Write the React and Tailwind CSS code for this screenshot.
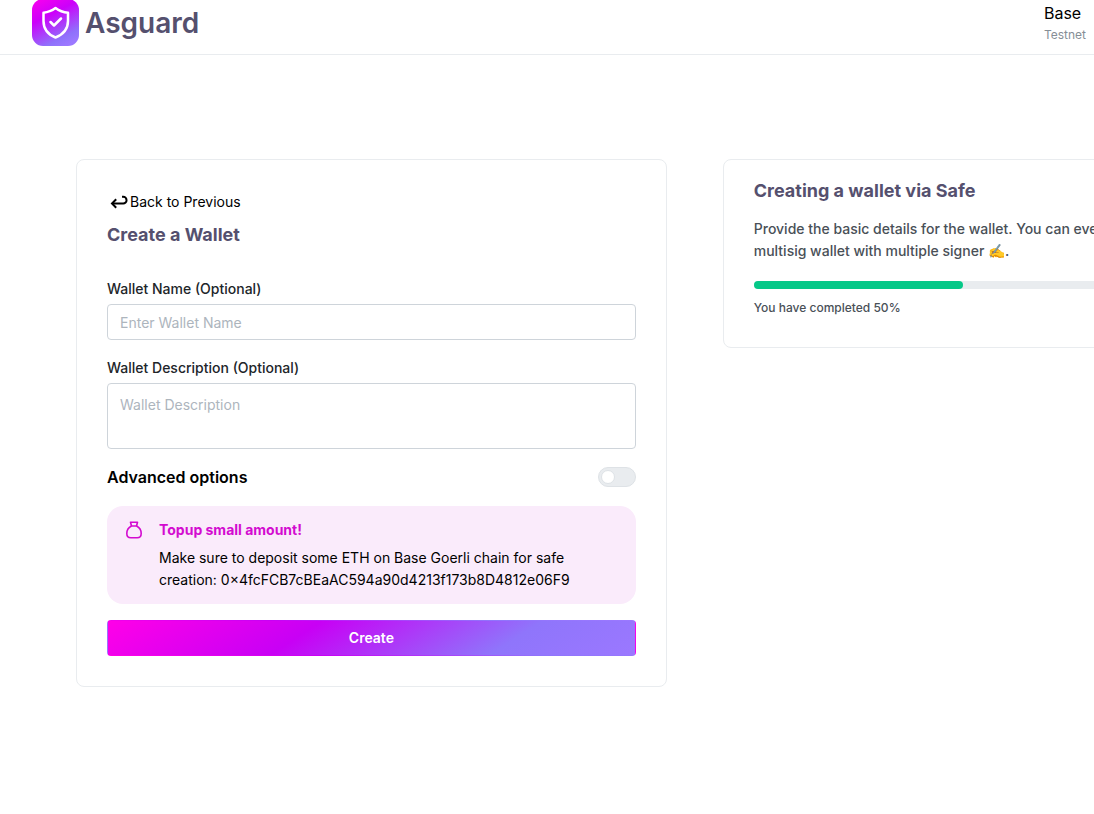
import { useState } from 'react';

function Logo() {
  return (
    <a href="#" className="flex items-center gap-1.5">
      <svg width="47" height="47" viewBox="0 0 47 47" fill="none" aria-hidden="true">
        <defs>
          <linearGradient id="logo-bg" x1="8" y1="0" x2="32" y2="47" gradientUnits="userSpaceOnUse">
            <stop offset="0" stopColor="#f500f0" />
            <stop offset="0.35" stopColor="#cc00fa" />
            <stop offset="0.85" stopColor="#8f72fb" />
            <stop offset="1" stopColor="#9b78ff" />
          </linearGradient>
        </defs>
        <rect width="47" height="47" rx="11" fill="url(#logo-bg)" />
        <path
          d="M23.5 9 C19.5 12 15.5 13.3 11.5 13.7 V22 C11.5 30 16 35.5 23.5 38.5 C31 35.5 36 30 36 22 V13.7 C31.5 13.3 27.5 12 23.5 9 Z"
          stroke="white"
          strokeWidth="2.5"
          strokeLinejoin="round"
        />
        <path d="M18.5 23 L22 26.5 L29 19.5" stroke="white" strokeWidth="2.5" strokeLinecap="round" strokeLinejoin="round" />
      </svg>
      <span className="text-[28px] leading-9 font-semibold text-[#55506e]">Asguard</span>
    </a>
  );
}

function BackIcon() {
  return (
    <svg width="18" height="16" viewBox="0 0 18 16" fill="none" stroke="black" strokeWidth="2" aria-hidden="true">
      <path d="M12 2.8 H13.2 A3.3 3.3 0 0 1 13.2 9.5 H2" />
      <path d="M6.2 5.3 L2 9.5 L6.2 13.7" />
    </svg>
  );
}

function BagIcon() {
  return (
    <svg width="18" height="18" viewBox="0 0 18 18" fill="none" stroke="#d30bd0" strokeWidth="1.6" strokeLinejoin="round" aria-hidden="true">
      <path d="M5.5 1.2 H12.5 L11.5 5 H6.5 Z" />
      <path d="M6.5 5 C3.5 6.5 1.8 9.5 1.8 12.5 C1.8 15.5 3.2 16.8 5.8 16.8 H12.2 C14.8 16.8 16.2 15.5 16.2 12.5 C16.2 9.5 14.5 6.5 11.5 5" />
    </svg>
  );
}

export default function App() {
  const [name, setName] = useState('');
  const [description, setDescription] = useState('');
  const [advanced, setAdvanced] = useState(false);
  const progress = 50;

  return (
    <div className="min-h-screen overflow-x-hidden bg-white font-['Inter',sans-serif] text-sm leading-[22px] text-black">
      <header className="flex h-[55px] items-start justify-between border-b border-[#e9ecef] pr-2 pl-8">
        <div className="-mt-px">
          <Logo />
        </div>
        <div>
          <div className="text-base leading-[26px]">Base</div>
          <div className="text-xs leading-[18px] text-[#868e96]">Testnet</div>
        </div>
      </header>

      <main className="flex items-start gap-14 pt-[104px] pb-16 pl-[76px]">
        <section className="w-[54vw] shrink-0 rounded-lg border border-[#e9ecef] p-[30px]">
          <a href="#" className="flex h-6 items-center gap-0.5 pl-[3px]">
            <BackIcon />
            Back to Previous
          </a>
          <h1 className="mt-[7px] text-lg leading-7 font-bold text-[#55506e]">Create a Wallet</h1>

          <form onSubmit={(e) => e.preventDefault()}>
            <label htmlFor="wallet-name" className="mt-[29px] block font-medium text-[#212529]">
              Wallet Name (Optional)
            </label>
            <input
              id="wallet-name"
              type="text"
              placeholder="Enter Wallet Name"
              value={name}
              onChange={(e) => setName(e.target.value)}
              className="mt-1 block h-9 w-full rounded border border-[#ced4da] px-3 placeholder:text-[#adb5bd]"
            />

            <label htmlFor="wallet-description" className="mt-[17px] block font-medium text-[#212529]">
              Wallet Description (Optional)
            </label>
            <textarea
              id="wallet-description"
              placeholder="Wallet Description"
              value={description}
              onChange={(e) => setDescription(e.target.value)}
              className="mt-1 block h-[66px] w-full resize-none rounded border border-[#ced4da] px-3 py-2.5 placeholder:text-[#adb5bd]"
            />

            <div className="mt-4 flex h-6 items-center justify-between">
              <label htmlFor="advanced" className="text-base font-semibold">
                Advanced options
              </label>
              <input
                id="advanced"
                type="checkbox"
                role="switch"
                checked={advanced}
                onChange={(e) => setAdvanced(e.target.checked)}
                className="flex h-5 w-[38px] cursor-pointer appearance-none items-center rounded-full border border-[#dee2e6] bg-[#e9ecef] px-0.5 before:size-3.5 before:rounded-full before:border before:border-[#dee2e6] before:bg-white checked:justify-end checked:bg-[#d30bd0]"
              />
            </div>

            <div className="mt-[17px] flex gap-4 rounded-2xl bg-[#faebfb] py-[13px] pr-4 pl-[18px]">
              <div className="mt-0.5 w-[18px] shrink-0">
                <BagIcon />
              </div>
              <div>
                <h2 className="font-bold text-[#d30bd0]">Topup small amount!</h2>
                <p className="mt-1.5">
                  Make sure to deposit some ETH on Base Goerli chain for safe creation: 0×4fcFCB7cBEaAC594a90d4213f173b8D4812e06F9
                </p>
              </div>
            </div>

            <button
              type="submit"
              className="mt-4 block h-9 w-full cursor-pointer rounded border border-transparent bg-[linear-gradient(147deg,#ff00e8_0%,#c800f5_37%,#8f75fb_75%,#9b78ff_100%)] font-semibold text-white"
            >
              Create
            </button>
          </form>
        </section>

        <section className="w-[44vw] shrink-0 rounded-lg border border-[#e9ecef] px-[30px] pt-[17px] pb-7">
          <h2 className="text-lg leading-7 font-bold text-[#55506e]">Creating a wallet via Safe</h2>
          <p className="mt-[13px] font-medium text-[#495057]">
            Provide the basic details for the wallet. You can even create a multisig wallet with multiple signer ✍️.
          </p>
          <div
            role="progressbar"
            aria-valuenow={progress}
            aria-valuemin={0}
            aria-valuemax={100}
            aria-label="Wallet creation"
            className="mt-[19px] h-2 rounded-full bg-[#e9ecef]"
          >
            <div className="h-2 rounded-full bg-[#06c888]" style={{ width: `${progress}%` }} />
          </div>
          <p className="mt-2 text-xs leading-[22px] font-medium text-[#495057]">You have completed {progress}%</p>
        </section>
      </main>
    </div>
  );
}
